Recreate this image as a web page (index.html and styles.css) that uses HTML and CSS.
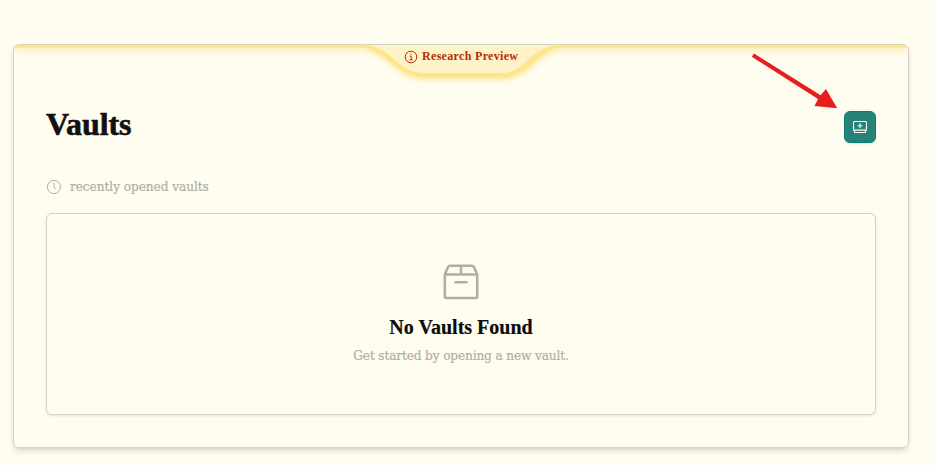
FILE: index.html
```html
<!DOCTYPE html>
<html lang="en">
<head>
<meta charset="utf-8">
<title>Vaults</title>
<link rel="stylesheet" href="styles.css">
</head>
<body>
<main class="card">
  <div class="preview">
    <svg class="ribbon" width="894" height="48" viewBox="0 0 894 48" fill="none">
      <path class="ribbon-fill" d="M350 0C382 2 380 30 413 30H481C514 30 512 2 544 0Z"/>
      <path class="ribbon-line" d="M-8 1H344C379 1 378 30 413 30H485C520 30 519 1 550 1H902"/>
    </svg>
    <div class="preview-label">
      <svg width="14" height="14" viewBox="0 0 14 14" fill="none" stroke="currentColor"><circle cx="7" cy="7" r="5.8"/><path d="M5.8 6.2H7.2V9.7M5.6 9.8H8.6M6.4 4.2H7.5"/></svg>
      <span>Research Preview</span>
    </div>
  </div>
  <header class="header">
    <h1 class="title">Vaults</h1>
    <button class="add" aria-label="Open vault">
      <svg width="16" height="16" viewBox="0 0 16 16" fill="none" stroke="currentColor" stroke-width="1.15" stroke-linejoin="round" stroke-linecap="round"><rect x="1.5" y="2.5" width="13" height="8.6" rx="1.3"/><path d="M2 11.3L2.8 13.5H13.2L14 11.3M8 4.7V8.7M6 6.7H10"/></svg>
    </button>
  </header>
  <div class="recent">
    <svg width="16" height="16" viewBox="0 0 16 16" fill="none" stroke="currentColor" stroke-linecap="round"><circle cx="8" cy="8" r="6.6"/><path d="M8 4V7.7L9.7 10.1"/></svg>
    <span class="recent-text">recently opened vaults</span>
  </div>
  <section class="empty">
    <svg width="36" height="36" viewBox="0 0 36 36" fill="none" stroke="currentColor" stroke-width="2.6" stroke-linejoin="round" stroke-linecap="round"><path d="M1.8 10.5V32.5Q1.8 34 3.3 34H32.7Q34.2 34 34.2 32.5V10.5L30.9 3Q30.3 1.8 29 1.8H7Q5.7 1.8 5.1 3ZH34.2M18 1.8V10M12.5 18.2H23.5"/></svg>
    <h2 class="empty-title">No Vaults Found</h2>
    <p class="empty-text">Get started by opening a new vault.</p>
  </section>
</main>
<svg class="arrow" width="88" height="60" viewBox="0 0 88 60"><path d="M3 3.5L0.8 6.8L67 49L63.5 56L86.2 58.2L75 39L69.6 45.2Z"/></svg>
</body>
</html>
```
FILE: styles.css
```css
* { box-sizing: border-box; }

body {
  margin: 0;
  padding: 44px 26px 17px 13px;
  background: #fffdf0;
  font-family: "DejaVu Serif Condensed", "DejaVu Serif", serif;
  overflow: hidden;
}

.card {
  position: relative;
  height: 404px;
  padding: 66px 32px 32px;
  border: 1px solid #d4d3c7;
  border-radius: 6px;
  box-shadow: 0 4px 7px -1px rgb(0 0 0 / 12%), 0 2px 4px -2px rgb(0 0 0 / 12%);
}

.preview {
  position: absolute;
  inset: 0 0 auto;
  height: 48px;
  overflow: hidden;
  border-radius: 5px 5px 0 0;
}

.ribbon {
  display: block;
  filter: drop-shadow(0 2px 3px rgb(253 216 100 / 85%));
}

.ribbon-fill { fill: #fef2c9; }

.ribbon-line {
  stroke: #fde588;
  stroke-width: 3.5;
}

.preview-label {
  position: absolute;
  top: 3px;
  left: 390px;
  display: flex;
  align-items: center;
  gap: 4px;
  height: 16px;
  color: #b42d08;
  font: bold 12px/16px "Liberation Serif", serif;
  letter-spacing: 0.32px;
  white-space: nowrap;
}

.preview-label svg { margin-top: 2px; }

.header {
  display: flex;
  justify-content: space-between;
  height: 32px;
}

.title {
  margin: -5px 0 0;
  color: #11110f;
  font: bold 32px/36px "Liberation Serif", serif;
  letter-spacing: -0.1px;
  -webkit-text-stroke: 0.6px;
}

.add {
  display: grid;
  place-items: center;
  width: 32px;
  height: 32px;
  padding: 0;
  border: 1px solid #087f70;
  border-radius: 6px;
  background: #27827a;
  color: #fffdf0;
  box-shadow: 0 1px 2px rgb(0 0 0 / 10%);
}

.recent {
  display: flex;
  align-items: center;
  gap: 8px;
  height: 20px;
  margin-top: 34px;
  color: #afaea3;
}

.recent-text, .empty-text {
  font-size: 13.5px;
  line-height: 20px;
  letter-spacing: -0.06px;
  white-space: nowrap;
  -webkit-text-stroke: 0.2px;
}

.recent-text { margin-top: -3px; }

.empty {
  display: flex;
  flex-direction: column;
  align-items: center;
  height: 202px;
  margin-top: 16px;
  padding-top: 50px;
  border: 1px solid #d4d3c7;
  border-radius: 6px;
  color: #b0afa4;
  box-shadow: 0 1px 3px rgb(0 0 0 / 10%);
}

.empty-title {
  margin: 13px 0 0;
  color: #0b0b0a;
  font: bold 20px/28px "Liberation Serif", serif;
  -webkit-text-stroke: 0.2px;
  white-space: nowrap;
}

.empty-text {
  margin: 4px 0 0;
  letter-spacing: -0.14px;
}

.arrow {
  position: absolute;
  top: 50px;
  left: 751px;
  fill: #e81e1e;
}
```
